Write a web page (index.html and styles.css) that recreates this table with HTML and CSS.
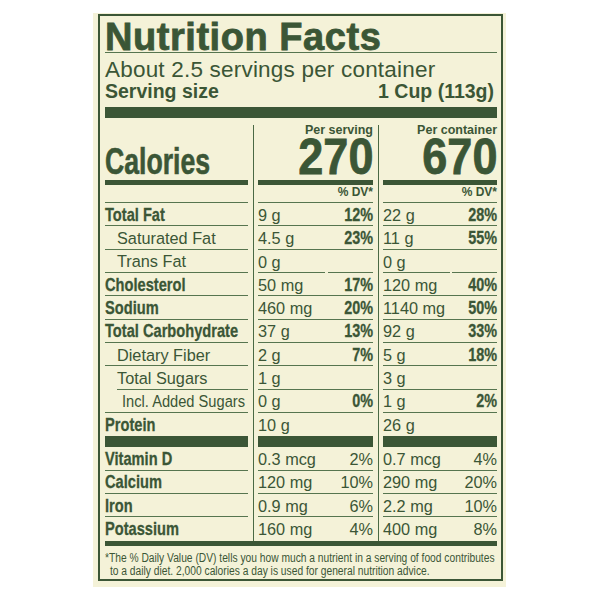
FILE: index.html
```html
<!DOCTYPE html>
<html lang="en">
<head>
<meta charset="utf-8">
<title>Nutrition Facts</title>
<link rel="stylesheet" href="styles.css">
</head>
<body>
<div class="sheet">
  <div class="label">
    <h1 class="title">Nutrition Facts</h1>
    <p class="servings">About 2.5 servings per container</p>
    <div class="size"><span>Serving size</span><span>1 Cup (113g)</span></div>
    <div class="bar-xl"></div>
    <div class="table">
      <div class="col col-names">
        <div class="cal-label"><span class="c">Calories</span></div>
        <div class="bar-md"></div>
        <div class="row dvhead"></div>
        <div class="row"><span class="c">Total Fat</span></div>
        <div class="row in1">Saturated Fat</div>
        <div class="row in1">Trans Fat</div>
        <div class="row"><span class="c">Cholesterol</span></div>
        <div class="row"><span class="c">Sodium</span></div>
        <div class="row"><span class="c">Total Carbohydrate</span></div>
        <div class="row in1">Dietary Fiber</div>
        <div class="row rule-in">Total Sugars</div>
        <div class="row in2"><span class="sq">Incl. Added Sugars</span></div>
        <div class="row last"><span class="c">Protein</span></div>
        <div class="bar-lg"></div>
        <div class="row"><span class="c">Vitamin D</span></div>
        <div class="row"><span class="c">Calcium</span></div>
        <div class="row"><span class="c">Iron</span></div>
        <div class="row last"><span class="c">Potassium</span></div>
      </div>
      <div class="col col-vals">
        <div class="head">Per serving</div>
        <div class="big"><span class="cr">270</span></div>
        <div class="bar-md"></div>
        <div class="row dvhead">% DV*</div>
        <div class="row"><span>9 g</span><b class="cr">12%</b></div>
        <div class="row"><span>4.5 g</span><b class="cr">23%</b></div>
        <div class="row split"><span>0 g</span></div>
        <div class="row"><span>50 mg</span><b class="cr">17%</b></div>
        <div class="row"><span>460 mg</span><b class="cr">20%</b></div>
        <div class="row"><span>37 g</span><b class="cr">13%</b></div>
        <div class="row"><span>2 g</span><b class="cr">7%</b></div>
        <div class="row"><span>1 g</span></div>
        <div class="row"><span>0 g</span><b class="cr">0%</b></div>
        <div class="row last"><span>10 g</span></div>
        <div class="bar-lg"></div>
        <div class="row"><span>0.3 mcg</span><span>2%</span></div>
        <div class="row"><span>120 mg</span><span>10%</span></div>
        <div class="row"><span>0.9 mg</span><span>6%</span></div>
        <div class="row last"><span>160 mg</span><span>4%</span></div>
      </div>
      <div class="col col-cont">
        <div class="head">Per container</div>
        <div class="big"><span class="cr">670</span></div>
        <div class="bar-md"></div>
        <div class="row dvhead">% DV*</div>
        <div class="row"><span>22 g</span><b class="cr">28%</b></div>
        <div class="row"><span>11 g</span><b class="cr">55%</b></div>
        <div class="row split"><span>0 g</span></div>
        <div class="row"><span>120 mg</span><b class="cr">40%</b></div>
        <div class="row"><span>1140 mg</span><b class="cr">50%</b></div>
        <div class="row"><span>92 g</span><b class="cr">33%</b></div>
        <div class="row"><span>5 g</span><b class="cr">18%</b></div>
        <div class="row"><span>3 g</span></div>
        <div class="row"><span>1 g</span><b class="cr">2%</b></div>
        <div class="row last"><span>26 g</span></div>
        <div class="bar-lg"></div>
        <div class="row"><span>0.7 mcg</span><span>4%</span></div>
        <div class="row"><span>290 mg</span><span>20%</span></div>
        <div class="row"><span>2.2 mg</span><span>10%</span></div>
        <div class="row last"><span>400 mg</span><span>8%</span></div>
      </div>
    </div>
    <div class="bar-bottom"></div>
    <p class="foot">*The % Daily Value (DV) tells you how much a nutrient in a serving of food contributes<br>to a daily diet. 2,000 calories a day is used for general nutrition advice.</p>
  </div>
</div>
</body>
</html>
```
FILE: styles.css
```css
* {
  box-sizing: border-box;
  margin: 0;
  padding: 0;
}

body {
  background: #ffffff;
  margin: 0;
}

.sheet {
  margin: 13px 0 0 93px;
  width: 413px;
  height: 574px;
  background: #f4f2d8;
  padding: 1px 3px 6px 5px;
}

.label {
  height: 100%;
  border: 2px solid #3b5636;
  padding: 0 4px 0 5px;
  color: #3b5636;
  font-family: "Liberation Sans", Arial, sans-serif;
}

/* condensed bold look: Liberation Sans Bold squeezed horizontally */
.c {
  display: inline-block;
  font-weight: 700;
  font-size: 19px;
  transform: scaleX(0.77);
  transform-origin: left center;
  -webkit-text-stroke: 0.3px currentColor;
}

.cr {
  display: inline-block;
  font-weight: 700;
  font-size: 18px;
  transform: scaleX(0.8);
  transform-origin: right center;
  -webkit-text-stroke: 0.3px currentColor;
}

.sq {
  display: inline-block;
  transform: scaleX(0.9);
  transform-origin: left center;
}

.title {
  font-size: 38px;
  font-weight: 700;
  line-height: 30px;
  padding-top: 6px;
  letter-spacing: 0.55px;
  border-bottom: 1px solid #56754f;
  -webkit-text-stroke: 0.8px currentColor;
}

.servings {
  font-size: 22.5px;
  line-height: 22px;
  margin-top: 6px;
  letter-spacing: 0.2px;
}

.size {
  display: flex;
  justify-content: space-between;
  font-size: 19.5px;
  font-weight: 700;
  line-height: 20px;
  padding-right: 3px;
}

.bar-xl {
  height: 11px;
  margin-top: 6px;
  background: #3b5636;
}

.table {
  display: flex;
  margin-top: 7px;
}

.col-names {
  width: 148px;
  padding-right: 5px;
}

.col-vals {
  width: 125px;
  border-left: 1px solid #4a6944;
  padding: 0 5px 0 4px;
}

.col-cont {
  width: 119px;
  border-left: 1px solid #4a6944;
  padding-left: 4px;
}

.cal-label {
  height: 54px;
  display: flex;
  align-items: flex-end;
  line-height: 34px;
}

.cal-label .c {
  font-size: 36px;
  transform: scaleX(0.74);
  -webkit-text-stroke: 0.6px currentColor;
}

.head {
  height: 12px;
  text-align: right;
  font-size: 12.5px;
  font-weight: 700;
  line-height: 11px;
}

.big {
  height: 42px;
  text-align: right;
  line-height: 40px;
}

.big .cr {
  font-size: 50px;
  transform: scaleX(0.9);
  -webkit-text-stroke: 0.8px currentColor;
}

.bar-md {
  height: 5px;
  margin-top: 1px;
  background: #3b5636;
}

.bar-lg {
  height: 11px;
  background: #3b5636;
}

.row {
  height: 23.33px;
  border-bottom: 1px solid #56754f;
  display: flex;
  align-items: center;
  justify-content: space-between;
  font-size: 16.3px;
  line-height: 18px;
  padding-top: 1px;
  white-space: nowrap;
}

.row.last {
  border-bottom: none;
}

.row.split {
  border-bottom: none;
  background:
    linear-gradient(#56754f, #56754f) left bottom / 67px 1px no-repeat,
    linear-gradient(#56754f, #56754f) right bottom / 45px 1px no-repeat;
}

.row.dvhead {
  height: 18px;
  justify-content: flex-end;
  align-items: flex-end;
  font-size: 12px;
  font-weight: 700;
  line-height: 14px;
  padding: 0 0 3px;
}

.in1 {
  padding-left: 12px;
}

.in2 {
  padding-left: 17px;
}

.rule-in {
  margin-left: 12px;
}

.bar-bottom {
  height: 5px;
  background: #3b5636;
}

.foot {
  margin-top: 6px;
  width: 480px;
  font-size: 12.5px;
  line-height: 13px;
  padding-left: 6px;
  text-indent: -6px;
  white-space: nowrap;
  transform: scaleX(0.82);
  transform-origin: left top;
}
```
